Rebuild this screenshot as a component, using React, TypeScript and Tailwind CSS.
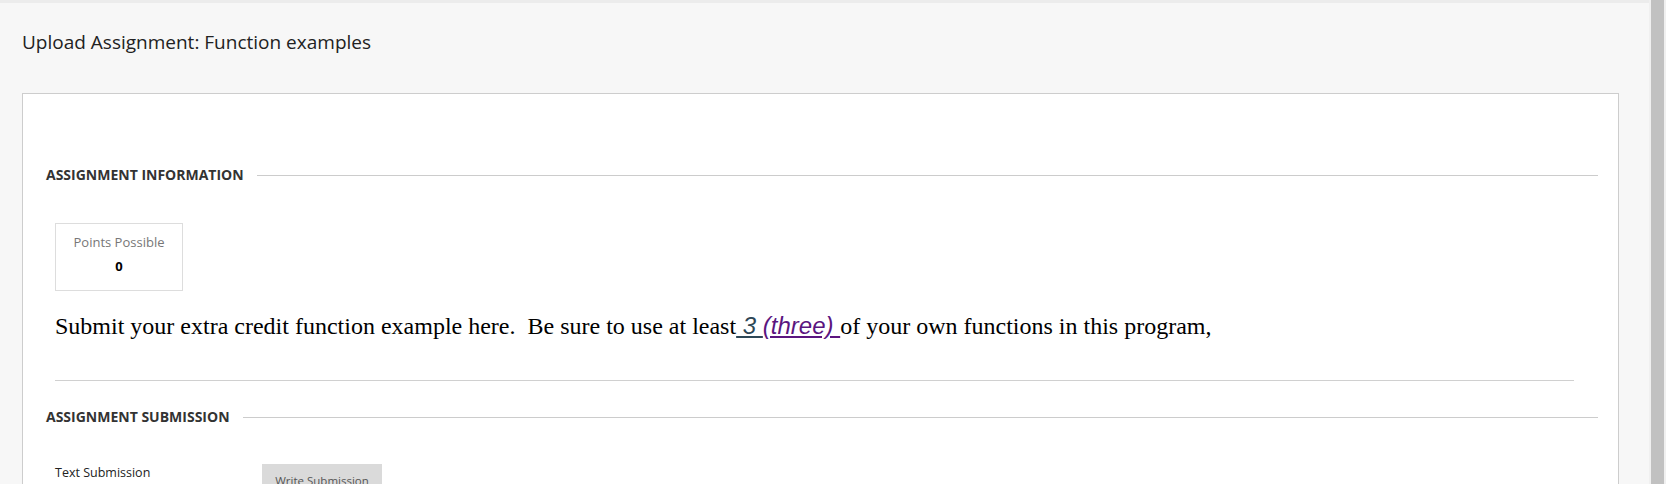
import React from "react";

const sans = "font-['Open_Sans',sans-serif]";

function SectionHeading({ title }: { title: string }) {
  return (
    <div className="flex items-center h-[18px]">
      <h2 className={`${sans} text-[14px] leading-[18px] font-bold uppercase text-[#333333] whitespace-nowrap`}>{title}</h2>
      <div className="flex-1 h-px bg-[#cccccc] ml-[13px]" />
    </div>
  );
}

export default function App() {
  return (
    <div className="w-full h-[484px] overflow-hidden bg-[#ececec] flex">
      <div className="flex-1 mt-[3px] bg-[#f7f7f7] pl-[22px] pr-[30px] pt-[26px]">
        <h1 className={`${sans} text-[19px] leading-[26px] font-normal text-[#222222]`}>
          Upload Assignment: Function examples
        </h1>
        <div className="mt-[38px] bg-white border border-[#cdcdcd] pl-[23px] pr-[20px] pt-[72px] h-[500px]">
          <SectionHeading title="Assignment Information" />
          <div className="pl-[9px] pr-[24px]">
            <div className="mt-[39px] w-[128px] h-[68px] border border-[#dddddd] flex flex-col items-center pt-[9px]">
              <div className={`${sans} text-[13px] leading-[18px] text-[#777777]`}>Points Possible</div>
              <div className={`${sans} text-[13px] leading-[18px] font-bold text-[#000000] mt-[6px]`}>0</div>
            </div>
            <p className="mt-[20px] font-['Liberation_Serif',serif] text-[24px] leading-[30px] text-black whitespace-pre">
              {"Submit your extra credit function example here.  Be sure to use at least"}
              <span className="font-['Liberation_Sans',sans-serif] italic underline decoration-[#2e4756] text-[#2e4756]">{" 3 "}</span>
              <span className="font-['Liberation_Sans',sans-serif] italic underline decoration-[#5b157f] text-[#5b157f]">{"(three) "}</span>
              {"of your own functions in this program,"}
            </p>
            <div className="mt-[39px] h-px bg-[#d0d0d0]" />
          </div>
          <div className="mt-[27px]">
            <SectionHeading title="Assignment Submission" />
          </div>
          <div className="pl-[9px] mt-[38px] flex">
            <div className={`${sans} text-[12.5px] leading-[18px] text-[#222222] w-[207px]`}>Text Submission</div>
            <button className={`${sans} w-[120px] h-[30px] bg-[#dadada] text-[11.5px] text-[#555555] pt-[8px] leading-[18px] flex justify-center items-start`}>
              Write Submission
            </button>
          </div>
        </div>
      </div>
      <div className="w-[17px] h-full bg-[#f0f0f0] pl-[2px] pr-[2px]">
        <div className="h-full bg-[#c1c1c1]" />
      </div>
    </div>
  );
}
